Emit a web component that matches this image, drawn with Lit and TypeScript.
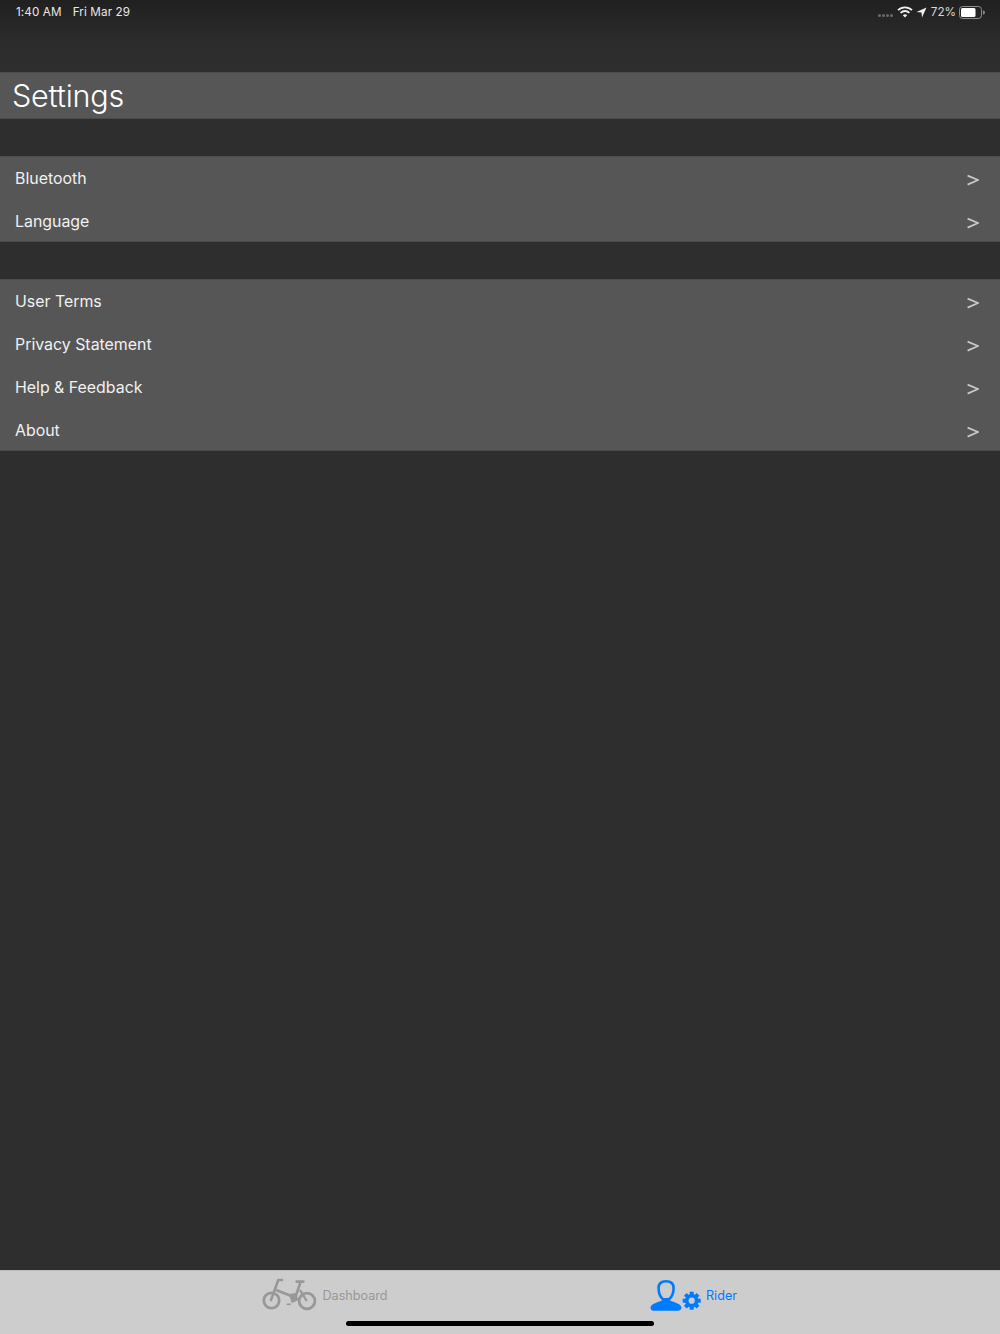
import { LitElement, html, css, svg } from "lit";
import { customElement } from "lit/decorators.js";

const font = css`"Inter", "Liberation Sans", sans-serif`;

@customElement("app-root")
export class AppRoot extends LitElement {
  static styles = css`
    :host { display: flex; flex-direction: column; height: 1334px; background: #2e2e2e; font-family: ${font}; color: #fff; overflow: hidden; }
    .top { height: 72px; box-sizing: border-box; background: linear-gradient(#202020, #2c2c2c 60%, #2e2e2e); padding: 5px 15px 0 16px; display: flex; justify-content: space-between; align-items: flex-start; font-size: 11.7px; line-height: 14px; color: #e8e8e8; flex: none; }
    .left { display: flex; gap: 11px; letter-spacing: 0.1px; }
    .right { display: flex; align-items: center; height: 14px; color: #d8d8d8; }
    .dots { display: flex; gap: 1px; margin-right: 3px; margin-top: 6px; }
    .dots i { width: 3px; height: 3px; border-radius: 50%; background: #6a6a6a; display: block; }
    .wifi { margin: 0 3px 0 1px; }
    .pct { margin: 0 3px 0 4px; }
    .title { height: 47px; box-sizing: border-box; background: #565656; box-shadow: inset 0 1px 0 #4e4e4e, inset 0 -1px 0 #4a4a4a; font-size: 30.5px; line-height: 48px; padding-left: 12px; font-weight: 300; letter-spacing: -0.2px; flex: none; overflow: hidden; }
    .group { background: #565656; margin-top: 37px; flex: none; box-shadow: inset 0 1px 0 #4e4e4e, inset 0 -1px 0 #4a4a4a; }
    .row { height: 43px; display: flex; align-items: center; justify-content: space-between; padding: 0 21px 0 15px; font-size: 15.9px; color: #f0f0f0; font-weight: 400; }
    .row span { margin-top: 1px; }
    .row svg { display: block; margin-top: 4px; }
    .spacer { flex: 1; }
    .tabs { position: relative; height: 64px; box-sizing: border-box; background: #cdcdcd; border-top: 1px solid #bcbcbc; flex: none; padding-left: 140px; }
    .tabgrid { display: grid; grid-template-columns: 369px 369px; height: 100%; }
    .tab { display: flex; justify-content: center; align-items: flex-start; padding-top: 7px; font-size: 12.6px; color: #989898; }
    .tab.on { color: #007aff; }
    .tab svg { display: block; }
    .tab span { margin-left: 6px; margin-top: 10px; line-height: 16px; }
    .tab.on span { margin-left: 4px; }
    .home { position: absolute; left: 346px; top: 50px; width: 308px; height: 5px; border-radius: 3px; background: #000; }
  `;

  rowItem(t: string) {
    return html`<div class="row"><span>${t}</span>
      <svg width="12" height="12" viewBox="0 0 12 12" fill="none"><path d="M0.6 1.6 L11 6 L0.6 10.6" stroke="#c8c8c8" stroke-width="1.7"/></svg></div>`;
  }

  render() {
    return html`
      <div class="top">
        <div class="left"><span>1:40 AM</span><span>Fri Mar 29</span></div>
        <div class="right">
          <div class="dots"><i></i><i></i><i></i><i></i></div>
          <svg class="wifi" width="16" height="12" viewBox="0 0 16 12" fill="none" stroke="#f0f0f0" stroke-width="1.8">
            <path d="M1 4.2 A10 10 0 0 1 15 4.2"/><path d="M3.6 6.8 A6.3 6.3 0 0 1 12.4 6.8"/><path d="M8 11.5 L5.8 9.2 A3.2 3.2 0 0 1 10.2 9.2 Z" fill="#f0f0f0" stroke="none"/>
          </svg>
          <svg width="11" height="11" viewBox="0 0 11 11"><path d="M10.5 .5 L.5 5 L5.500 5.400 L6 10.500 Z" fill="#f0f0f0"/></svg>
          <span class="pct">72%</span>
          <svg width="26" height="13" viewBox="0 0 26 13" fill="none">
            <rect x=".5" y=".5" width="22" height="12" rx="3" stroke="#8e8e8e"/>
            <rect x="2" y="2" width="14.500" height="9" rx="1.500" fill="#fff"/>
            <path d="M24 4.500 a2 2 0 0 1 0 4 z" fill="#8e8e8e"/>
          </svg>
        </div>
      </div>
      <div class="title">Settings</div>
      <div class="group">${["Bluetooth", "Language"].map((t) => this.rowItem(t))}</div>
      <div class="group">${["User Terms", "Privacy Statement", "Help & Feedback", "About"].map((t) => this.rowItem(t))}</div>
      <div class="spacer"></div>
      <div class="tabs">
        <div class="tabgrid">
          <div class="tab">
            <svg width="55" height="34" viewBox="0 0 55 34" fill="none" stroke="#989898">
              <circle cx="9.500" cy="22.500" r="7.700" stroke-width="2.800"/>
              <circle cx="45" cy="23" r="7.900" stroke-width="2.800"/>
              <path d="M9 22 L16.300 2 H20" stroke-width="2.600" stroke-linecap="round"/>
              <path d="M14 12 L31.300 18.700" stroke-width="2.600"/>
              <path d="M34.700 3.700 H41.300" stroke-width="2.800" stroke-linecap="round"/>
              <path d="M38.700 3.700 L33 20.300" stroke-width="2.600"/>
              <path d="M38 12 L44.700 23" stroke-width="2.400"/>
              <path d="M27.500 16.500 L34 15.500 L35.500 22 L30 24.500 Z" fill="#989898" stroke-width="1"/>
              <path d="M24.700 26.300 H28.700" stroke-width="1.600"/>
            </svg>
            <span>Dashboard</span>
          </div>
          <div class="tab on">
            <svg width="52" height="34" viewBox="0 0 52 34" fill="none">
              <path d="M12.500 18 L12.500 22 C10 24 1 25.200 .5 29.500 C.5 31.500 1.500 32.700 3.500 32.700 H28 C30 32.700 31.500 31.500 31.500 29.500 C31 25.200 22 24 19.500 22 L19.500 18 Z" fill="#007aff"/>
              <path d="M16 3.200 C10.500 3.200 8.600 5.500 8.600 10 C8.600 15 10.500 19 12.500 20.700 C13.500 21.500 18.500 21.500 19.500 20.700 C21.500 19 23.600 15 23.600 10 C23.600 5.500 21.500 3.200 16 3.200 Z" fill="#cdcdcd" stroke="#007aff" stroke-width="2.600"/>
              ${svg`<g transform="translate(41.700 22.700)">
                <circle r="4.900" fill="none" stroke="#007aff" stroke-width="3.600"/>
                ${[0, 45, 90, 135, 180, 225, 270, 315].map((a) => svg`<rect x="-2" y="-9" width="4" height="4" fill="#007aff" transform="rotate(${a})"/>`)}
              </g>`}
            </svg>
            <span>Rider</span>
          </div>
        </div>
        <div class="home"></div>
      </div>
    `;
  }
}
